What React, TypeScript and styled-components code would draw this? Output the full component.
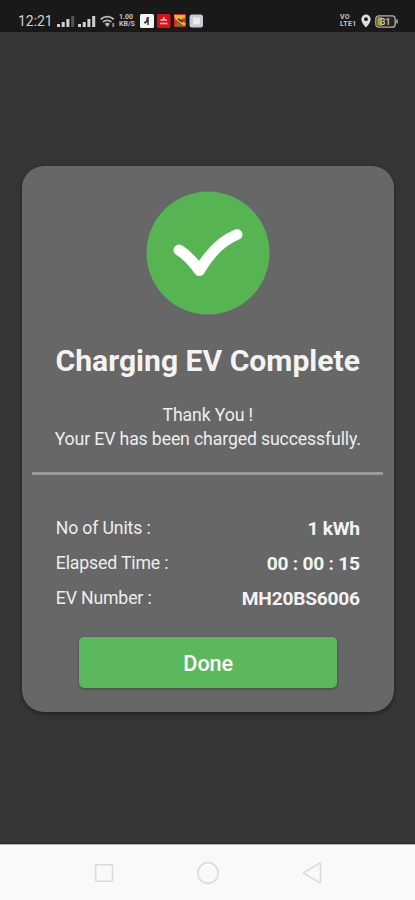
import React from 'react';
import styled, { createGlobalStyle } from 'styled-components';

const GlobalStyle = createGlobalStyle`
  * { box-sizing: border-box; }
  body { margin: 0; background: #363636; font-family: Roboto, "Liberation Sans", sans-serif; }
`;

const Screen = styled.div`
  display: flex;
  flex-direction: column;
  width: 415px;
  height: 900px;
  overflow: hidden;
  background: #363636;
`;

const StatusBar = styled.header`
  display: flex;
  justify-content: space-between;
  align-items: center;
  height: 32px;
  padding: 11px 17px 1px 18px;
  background: #191919;
  color: #cfcfcf;
`;

const StatusGroup = styled.div<{ $gap: number }>`
  display: flex;
  align-items: center;
  gap: ${(p) => p.$gap}px;
  height: 20px;
`;

const Clock = styled.span`
  width: 35px;
  font-size: 14px;
  line-height: 20px;
  letter-spacing: -0.05px;
  white-space: nowrap;
`;

const TinyStack = styled.span<{ $spacing: number }>`
  display: flex;
  flex-direction: column;
  width: 17px;
  font-size: 7px;
  font-weight: 700;
  line-height: 7px;
  letter-spacing: ${(p) => p.$spacing}px;
  white-space: nowrap;
  color: #c4c4c4;
`;

const Main = styled.main`
  flex: 1;
  padding: 134px 21px 0 21.5px;
`;

const Card = styled.section`
  display: flex;
  flex-direction: column;
  align-items: center;
  height: 545.5px;
  padding-top: 25px;
  border-radius: 22px;
  background: #676767;
  box-shadow: 0 2px 5px rgba(0, 0, 0, 0.4);
  color: #ededed;
`;

const Badge = styled.svg`
  display: block;
  flex: none;
  width: 124px;
  height: 124px;
`;

const Title = styled.h1`
  margin: 28px 0 0;
  font-size: 30.1px;
  font-weight: 700;
  line-height: 36px;
  white-space: nowrap;
  color: #f3f3f3;
`;

const Message = styled.p`
  margin: 24px 0 0;
  font-size: 17.7px;
  line-height: 24px;
  letter-spacing: -0.14px;
  text-align: center;
  white-space: nowrap;
`;

const Divider = styled.hr`
  width: 351px;
  height: 3px;
  margin: 21px 0 0;
  border: 0;
  background: #9a9a9a;
`;

const Details = styled.dl`
  width: 304px;
  margin: 36px 0 0;
`;

const DetailRow = styled.div`
  display: flex;
  justify-content: space-between;
  height: 35px;
  line-height: 35px;
`;

const Label = styled.dt`
  font-size: 17.7px;
  letter-spacing: -0.16px;
  white-space: nowrap;
`;

const Value = styled.dd`
  margin: 0;
  font-size: 19.2px;
  font-weight: 700;
  line-height: 36px;
  letter-spacing: -0.25px;
  white-space: nowrap;
  color: #f3f3f3;
`;

const DoneButton = styled.button`
  width: 258px;
  height: 51.5px;
  margin: 20.5px 0 0 1px;
  padding: 2px 0 0;
  border: 0;
  border-radius: 5px;
  background: #5cb85c;
  box-shadow: 0 1px 3px rgba(0, 0, 0, 0.35);
  color: #fff;
  font-family: inherit;
  font-size: 21.7px;
  font-weight: 500;
  letter-spacing: -0.1px;
`;

const NavBar = styled.nav`
  display: flex;
  justify-content: center;
  gap: 80px;
  height: 56px;
  padding-top: 16px;
  border-top: 1px solid #b4b4b4;
  background: #f9f9f9;
  box-shadow: 0 -1px 0 #2b2b2b;
`;

const NavIcon = styled.svg`
  width: 24px;
  height: 24px;
  fill: none;
  stroke: #dadada;
  stroke-width: 1.5;
  stroke-linejoin: round;
`;

const Signal = ({ weak = false }: { weak?: boolean }) => (
  <svg width="18" height="13" viewBox="0 0 18 13" fill="#d0d0d0">
    <rect x="0" y="9" width="3" height="3" />
    <rect x="4.7" y="7" width="3" height="5" />
    <rect x="9.4" y="4" width="3" height="8" />
    <rect x="14.2" y="1" width="3" height="11" fill={weak ? '#555' : '#d0d0d0'} />
  </svg>
);

const Wifi = () => (
  <svg width="16" height="13" viewBox="0 0 16 13" fill="none" stroke="#bdbdbd" strokeWidth="1.8">
    <path d="M.7 4.3Q7.2-1 13.8 4.3M3 7q4.2-3.3 8.4 0" />
    <path d="M4.7 8.7q2.6-2 5.2 0L7.3 12z" fill="#bdbdbd" stroke="none" />
    <path d="M13.3 8v4" stroke="#999" />
  </svg>
);

const AppTiles = () => (
  <svg width="64" height="14" viewBox="0 0 64 14">
    <rect width="14" height="14" rx="1.5" fill="#f4f4f4" />
    <path d="M6.8 3h2v8H7.4V8.2L4.8 10 4 8l2-1z" fill="#333" />
    <rect x="17" width="13.5" height="14" rx="1.5" fill="#dc1018" />
    <path d="M20.5 6H27M23.7 3v3.500M20 9.500h7.500" stroke="#ffc5c3" strokeWidth="1.6" />
    <rect x="34" width="12" height="13" rx="1" fill="#d22b20" />
    <path d="M34 1h11v3l-4 1 5 5-2 2-9-7z" fill="#efb832" />
    <path d="M35 10q3-3 9 2h-9z" fill="#388c55" />
    <path d="m38 5 5 3" stroke="#282828" strokeWidth="1.5" />
    <rect x="49.5" y=".5" width="13.5" height="13" rx="2.5" fill="#c8c9d2" />
    <rect x="53" y="3.5" width="7" height="7" rx="1" fill="#e8e8ec" />
  </svg>
);

const Pin = () => (
  <svg width="10" height="14" viewBox="0 0 10 14">
    <path fillRule="evenodd" fill="#dedede" d="M5 .5a4.7 4.7 0 0 0-4.7 4.7C.3 8.7 5 13.5 5 13.5s4.7-4.8 4.7-8.300A4.7 4.7 0 0 0 5 .5zm0 2.800a1.900 1.900 0 1 1 0 3.800 1.900 1.900 0 0 1 0-3.800z" />
  </svg>
);

const Battery = () => (
  <svg width="23" height="13" viewBox="0 0 23 13">
    <rect x=".8" y=".8" width="19.4" height="11.4" rx="3" fill="#252525" stroke="#b0b0b0" strokeWidth="1.3" />
    <path d="M3.5 2.3H7v8.400H3.500Q2.300 10.700 2.300 9V4q0-1.700 1.200-1.700z" fill="#a9a231" />
    <path d="M22 4.500v4" stroke="#b0b0b0" strokeWidth="1.5" />
    <text x="10.5" y="9.7" textAnchor="middle" fontFamily="Roboto, sans-serif" fontSize="8.5" fontWeight="700" fill="#c8c8c8">31</text>
  </svg>
);

const details = [
  { label: 'No of Units :', value: '1 kWh' },
  { label: 'Elapsed Time :', value: '00 : 00 : 15' },
  { label: 'EV Number :', value: 'MH20BS6006' },
];

export default function App() {
  return (
    <>
      <GlobalStyle />
      <Screen>
        <StatusBar>
          <StatusGroup $gap={3.5}>
            <Clock>12:21</Clock>
            <Signal weak />
            <Signal />
            <Wifi />
            <TinyStack $spacing={0}><span>1.00</span><span>KB/S</span></TinyStack>
            <AppTiles />
          </StatusGroup>
          <StatusGroup $gap={4}>
            <TinyStack $spacing={0.3}><span>VO</span><span>LTE1</span></TinyStack>
            <Pin />
            <Battery />
          </StatusGroup>
        </StatusBar>
        <Main>
          <Card>
            <Badge viewBox="0 0 124 124">
              <circle cx="62" cy="62" r="61.5" fill="#56b453" />
              <path d="M33 59Q43 65 53.5 79.5Q69.5 52 91 43.5" fill="none" stroke="#fff" strokeWidth="11" strokeLinecap="round" strokeLinejoin="round" />
            </Badge>
            <Title>Charging EV Complete</Title>
            <Message>Thank You !<br />Your EV has been charged successfully.</Message>
            <Divider />
            <Details>
              {details.map((d) => (
                <DetailRow key={d.label}>
                  <Label>{d.label}</Label>
                  <Value>{d.value}</Value>
                </DetailRow>
              ))}
            </Details>
            <DoneButton>Done</DoneButton>
          </Card>
        </Main>
        <NavBar>
          <NavIcon viewBox="0 0 24 24"><rect x="3.7" y="3.7" width="16.8" height="16.5" rx="1" /></NavIcon>
          <NavIcon viewBox="0 0 24 24"><circle cx="12" cy="12" r="10.2" /></NavIcon>
          <NavIcon viewBox="0 0 24 24"><path d="M4 11.5 19.5 2.2Q20.5 2 20.5 3V20.5Q20.5 22 19 21.2L4 12.500Q3.300 12 4 11.500z" /></NavIcon>
        </NavBar>
      </Screen>
    </>
  );
}
